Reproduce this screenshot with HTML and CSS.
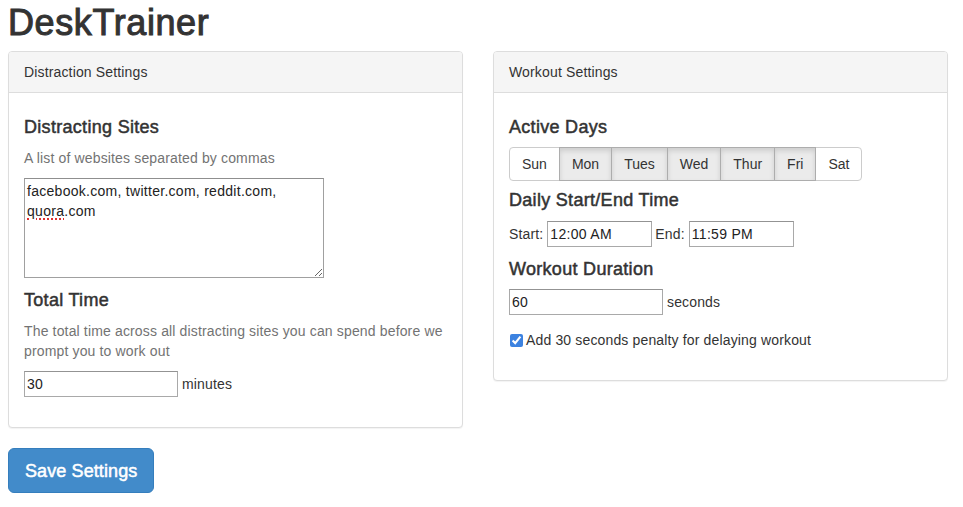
FILE: index.html
```html
<!DOCTYPE html>
<html>
<head>
<meta charset="utf-8">
<title>DeskTrainer</title>
<link rel="stylesheet" href="styles.css">
</head>
<body>
<div class="page">
  <h1 class="title">DeskTrainer</h1>
  <div class="columns">
    <section class="panel">
      <div class="panel-heading">Distraction Settings</div>
      <div class="panel-body">
        <div class="field">
          <h4>Distracting Sites</h4>
          <p class="help">A list of websites separated by commas</p>
          <div class="textarea">facebook.com, twitter.com, reddit.com, <span class="misspelled">quora</span>.com</div>
        </div>
        <div class="field gap-3">
          <h4>Total Time</h4>
          <p class="help">The total time across all distracting sites you can spend before we prompt you to work out</p>
          <div class="row"><input class="text-input w154" type="text" value="30"><span class="unit">minutes</span></div>
        </div>
      </div>
    </section>
    <section class="panel">
      <div class="panel-heading">Workout Settings</div>
      <div class="panel-body">
        <div class="field">
          <h4>Active Days</h4>
          <div class="btn-group">
            <span class="btn">Sun</span><span class="btn active">Mon</span><span class="btn active">Tues</span><span class="btn active">Wed</span><span class="btn active">Thur</span><span class="btn active">Fri</span><span class="btn">Sat</span>
          </div>
        </div>
        <div class="field">
          <h4>Daily Start/End Time</h4>
          <div class="row">
            <span class="lbl">Start:</span><input class="text-input w105" type="text" value="12:00 AM">
            <span class="lbl lbl-gap">End:</span><input class="text-input w105" type="text" value="11:59 PM">
          </div>
        </div>
        <div class="field gap-3">
          <h4>Workout Duration</h4>
          <div class="row"><input class="text-input w154" type="text" value="60"><span class="unit">seconds</span></div>
          <label class="check"><input type="checkbox" checked><span>Add 30 seconds penalty for delaying workout</span></label>
        </div>
      </div>
    </section>
  </div>
  <button class="save" type="button">Save Settings</button>
</div>
</body>
</html>
```

FILE: styles.css
```css
* { box-sizing: border-box; }

body {
  margin: 0;
  font-family: "Liberation Sans", Arial, Helvetica, sans-serif;
  font-size: 14px;
  line-height: 20px;
  letter-spacing: 0.15px;
  color: #333;
  background: #fff;
}

.page {
  padding: 0 15px 0 8px;
}

.title {
  margin: 3px 0 9px;
  font-size: 36px;
  line-height: 39px;
  font-weight: 400;
  letter-spacing: 0.6px;
  -webkit-text-stroke: 1px #333;
  color: #333;
}

.columns {
  display: grid;
  grid-template-columns: 455px 455px;
  column-gap: 30px;
  align-items: start;
}

.panel {
  border: 1px solid #ddd;
  border-radius: 4px;
  background: #fff;
  box-shadow: 0 1px 1px rgba(0,0,0,0.05);
  margin-bottom: 20px;
}

.panel-heading {
  background: #f5f5f5;
  border-bottom: 1px solid #ddd;
  border-radius: 3px 3px 0 0;
  padding: 10px 15px;
  height: 41px;
  color: #333;
}

.panel-body {
  padding: 15px;
}

.field h4 {
  margin: 10px 0 10px;
  font-size: 18px;
  line-height: 19.8px;
  font-weight: 400;
  letter-spacing: 0.3px;
  -webkit-text-stroke: 0.5px #333;
  color: #333;
}

.field.gap-3 {
  padding-top: 3px;
}

.field:last-child {
  margin-bottom: 15px;
}

.help {
  margin: 0 0 10px;
  color: #737373;
}

.textarea {
  width: 300px;
  height: 100px;
  border: 1px solid #a0a0a0;
  border-top-color: #8f8f8f;
  padding: 2px 2px;
  line-height: 20px;
  font-size: 14px;
  letter-spacing: 0.28px;
  color: #222;
  overflow: auto;
  resize: both;
  background: #fff;
}

.misspelled {
  text-decoration: underline dotted #e03030;
  text-decoration-thickness: 1.5px;
  text-underline-offset: 3px;
}

.row {
  display: flex;
  align-items: center;
  height: 26px;
}

.text-input {
  height: 26px;
  border: 1px solid #a9a9a9;
  border-top-color: #939393;
  padding: 1px 2px;
  margin: 0;
  font-family: "Liberation Sans", Arial, Helvetica, sans-serif;
  font-size: 14px;
  letter-spacing: 0.3px;
  color: #222;
  background: #fff;
  outline: none;
}

.w154 { width: 154px; }
.w105 { width: 105px; }

.unit { margin-left: 4px; }

.lbl { margin-right: 4px; }
.lbl-gap { margin-left: 3px; }

.btn-group {
  display: inline-flex;
  margin-top: -1px;
}

.btn {
  display: block;
  padding: 6px 12px;
  font-size: 14px;
  line-height: 20px;
  letter-spacing: 0;
  height: 34px;
  border: 1px solid #ccc;
  background: #fff;
  color: #333;
  margin-left: -1px;
}

.btn:first-child {
  margin-left: 0;
  border-radius: 4px 0 0 4px;
}

.btn:last-child {
  border-radius: 0 4px 4px 0;
}

.btn.active {
  background: #ebebeb;
  border-color: #adadad;
  box-shadow: inset 0 3px 5px rgba(0,0,0,0.125);
  position: relative;
}

.check {
  display: flex;
  align-items: center;
  margin-top: 15px;
  height: 20px;
}

.check input {
  margin: 0 3px 0 1px;
  width: 13px;
  height: 13px;
  accent-color: #3c82e0;
}

.save {
  display: block;
  padding: 10px 16px;
  font-family: "Liberation Sans", Arial, Helvetica, sans-serif;
  font-size: 18px;
  line-height: 24px;
  letter-spacing: 0.1px;
  height: 45px;
  color: #fff;
  -webkit-text-stroke: 0.5px #fff;
  background: #428bca;
  border: 1px solid #357ebd;
  border-radius: 6px;
  margin: 0;
}
```
